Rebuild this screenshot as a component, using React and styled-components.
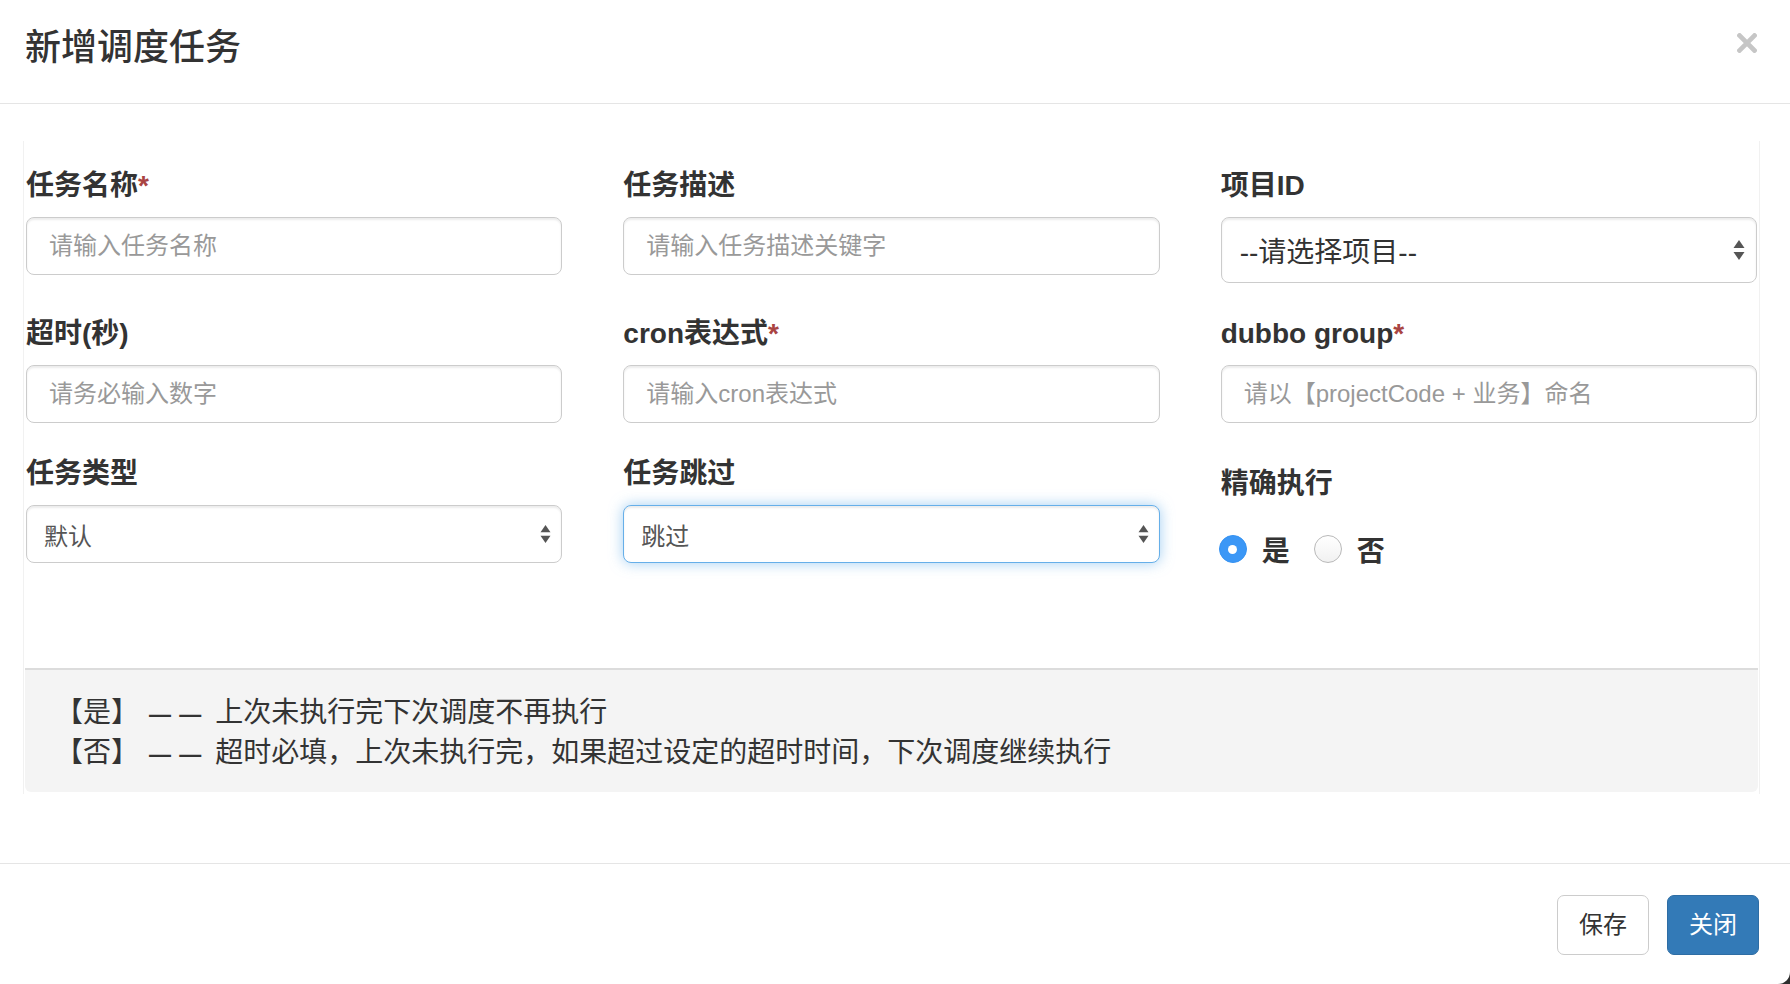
import React from "react";
import styled, { createGlobalStyle } from "styled-components";

const FONT = `"Liberation Sans", "Noto Sans CJK SC", sans-serif`;

const GlobalStyle = createGlobalStyle`
  html, body { margin: 0; padding: 0; background: #2e2e2e; }
  body { font-family: ${FONT}; color: #333; }
  * { box-sizing: border-box; }
`;

const Modal = styled.div`
  width: 1790px;
  height: 984px;
  background: #fff;
  border-bottom-right-radius: 12px;
  display: flex;
  flex-direction: column;
  overflow: hidden;
`;

const Header = styled.div`
  display: flex;
  justify-content: space-between;
  align-items: flex-start;
  padding: 28px 33px 35px 25px;
  border-bottom: 1px solid #e5e5e5;
`;

const Title = styled.h4`
  margin: 0;
  font-size: 36px;
  line-height: 40px;
  font-weight: 500;
  color: #333;
`;

const CloseButton = styled.button`
  border: 0;
  background: transparent;
  padding: 0;
  margin-top: 5px;
  width: 20px;
  height: 20px;
  display: flex;
  cursor: pointer;
`;

const Body = styled.div`
  padding: 37px 30px 69px 23px;
`;

const Panel = styled.div`
  border-left: 1px solid #f1f1f1;
  border-right: 1px solid #f1f1f1;
  padding: 25px 2px 2px 2px;
`;

const FormGrid = styled.div`
  display: grid;
  grid-template-columns: repeat(3, 1fr);
  column-gap: 61px;
  row-gap: 31px;
  align-items: start;
`;

const FormGroup = styled.div`
  display: flex;
  flex-direction: column;
`;

const Label = styled.label`
  font-size: 28px;
  line-height: 40px;
  font-weight: 700;
  color: #333;
  margin-bottom: 11px;
  padding-top: ${(p) => (p.$offset ? "10px" : "0")};
`;

const Required = styled.span`
  color: #a94442;
`;

const TextInput = styled.input`
  height: 58px;
  width: 100%;
  border: 1px solid #cccccc;
  border-radius: 8px;
  padding: 0 22px;
  font-family: ${FONT};
  font-size: 24px;
  color: #555;
  background: #fff;
  box-shadow: inset 0 2px 2px rgba(0, 0, 0, 0.075);
  outline: none;
  &::placeholder { color: #999; }
`;

const SelectBox = styled.div`
  height: ${(p) => (p.$large ? "66px" : "58px")};
  display: flex;
  align-items: center;
  justify-content: space-between;
  border: 1px solid ${(p) => (p.$focused ? "#66afe9" : "#cccccc")};
  border-radius: 8px;
  padding: 0 ${(p) => (p.$large ? "11px" : "10px")} 0 ${(p) => (p.$large ? "18px" : "17px")};
  font-size: ${(p) => (p.$large ? "28px" : "24px")};
  color: ${(p) => (p.$large ? "#333" : "#555")};
  background: #fff;
  box-shadow: ${(p) =>
    p.$focused
      ? "inset 0 2px 2px rgba(0,0,0,.075), 0 0 14px rgba(102,175,233,.6)"
      : "inset 0 2px 2px rgba(0,0,0,.075)"};
`;

const RadioRow = styled.div`
  display: flex;
  align-items: center;
  height: 40px;
  margin-top: 14px;
  margin-left: -2px;
`;

const RadioOption = styled.label`
  display: flex;
  align-items: center;
  font-size: 28px;
  font-weight: 700;
  color: #333;
  margin-right: 24px;
`;

const RadioCircle = styled.span`
  width: 28px;
  height: 28px;
  border-radius: 50%;
  margin-right: 15px;
  display: flex;
  align-items: center;
  justify-content: center;
  background: ${(p) => (p.$checked ? "#3b97f6" : "linear-gradient(#ffffff, #f1f1f1)")};
  border: ${(p) => (p.$checked ? "1px solid #3592f2" : "1px solid #b9b9b9")};
  &::after {
    content: "";
    display: ${(p) => (p.$checked ? "block" : "none")};
    width: 9px;
    height: 9px;
    border-radius: 50%;
    background: #fff;
  }
`;

const Note = styled.div`
  margin: 99px -1px 0;
  border-top: 2px solid #dcdcdc;
  background: #f4f4f4;
  border-radius: 0 0 6px 6px;
  padding: 23px 20px 19px 44px;
  font-size: 28px;
  line-height: 40px;
  color: #333;
`;

const NoteLine = styled.div`
  white-space: nowrap;
`;

const NoteTag = styled.span`
  font-feature-settings: "halt";
  margin-right: 24px;
`;

const NoteDash = styled.span`
  font-family: "Liberation Sans", sans-serif;
  font-size: 22px;
  line-height: 1;
  font-weight: 700;
  word-spacing: 2px;
  margin-right: 14px;
`;

const Footer = styled.div`
  border-top: 1px solid #e5e5e5;
  padding: 31px 31px;
  display: flex;
  justify-content: flex-end;
  gap: 18px;
`;

const Button = styled.button`
  font-family: ${FONT};
  font-size: 24px;
  line-height: 34px;
  padding: 12px 21px;
  border-radius: 7px;
  border: 1px solid ${(p) => (p.$primary ? "#2e6da4" : "#cccccc")};
  background: ${(p) => (p.$primary ? "#337ab7" : "#fff")};
  color: ${(p) => (p.$primary ? "#fff" : "#333")};
  cursor: pointer;
`;

const Arrows = ({ large }) => (
  <svg width={large ? 12 : 11} height={large ? 22 : 20} viewBox="0 0 12 22">
    <polygon points="6,1 11.5,9 0.5,9" fill="#555" />
    <polygon points="0.5,13 11.5,13 6,21" fill="#555" />
  </svg>
);

const CloseIcon = () => (
  <svg width="20" height="20" viewBox="0 0 20 20">
    <path d="M2.5 2.5 L17.5 17.5 M17.5 2.5 L2.5 17.5" stroke="#c6c6c6" strokeWidth="4.6" strokeLinecap="square" />
  </svg>
);

const Field = ({ label, required, offset, children }) => (
  <FormGroup>
    <Label $offset={offset}>
      {label}
      {required && <Required>*</Required>}
    </Label>
    {children}
  </FormGroup>
);

const Select = ({ value, large, focused }) => (
  <SelectBox $large={large} $focused={focused}>
    <span>{value}</span>
    <Arrows large={large} />
  </SelectBox>
);

export default function App() {
  return (
    <>
      <GlobalStyle />
      <Modal>
        <Header>
          <Title>新增调度任务</Title>
          <CloseButton aria-label="关闭">
            <CloseIcon />
          </CloseButton>
        </Header>
        <Body>
          <Panel>
            <FormGrid>
              <Field label="任务名称" required>
                <TextInput placeholder="请输入任务名称" />
              </Field>
              <Field label="任务描述">
                <TextInput placeholder="请输入任务描述关键字" />
              </Field>
              <Field label="项目ID">
                <Select value="--请选择项目--" large />
              </Field>

              <Field label="超时(秒)">
                <TextInput placeholder="请务必输入数字" />
              </Field>
              <Field label="cron表达式" required>
                <TextInput placeholder="请输入cron表达式" />
              </Field>
              <Field label="dubbo group" required>
                <TextInput placeholder="请以【projectCode + 业务】命名" />
              </Field>

              <Field label="任务类型">
                <Select value="默认" />
              </Field>
              <Field label="任务跳过">
                <Select value="跳过" focused />
              </Field>
              <Field label="精确执行" offset>
                <RadioRow>
                  <RadioOption>
                    <RadioCircle $checked />是
                  </RadioOption>
                  <RadioOption>
                    <RadioCircle />否
                  </RadioOption>
                </RadioRow>
              </Field>
            </FormGrid>
            <Note>
              <NoteLine>
                <NoteTag>【是】</NoteTag>
                <NoteDash>— —</NoteDash>上次未执行完下次调度不再执行
              </NoteLine>
              <NoteLine>
                <NoteTag>【否】</NoteTag>
                <NoteDash>— —</NoteDash>超时必填，上次未执行完，如果超过设定的超时时间，下次调度继续执行
              </NoteLine>
            </Note>
          </Panel>
        </Body>
        <Footer>
          <Button>保存</Button>
          <Button $primary>关闭</Button>
        </Footer>
      </Modal>
    </>
  );
}
